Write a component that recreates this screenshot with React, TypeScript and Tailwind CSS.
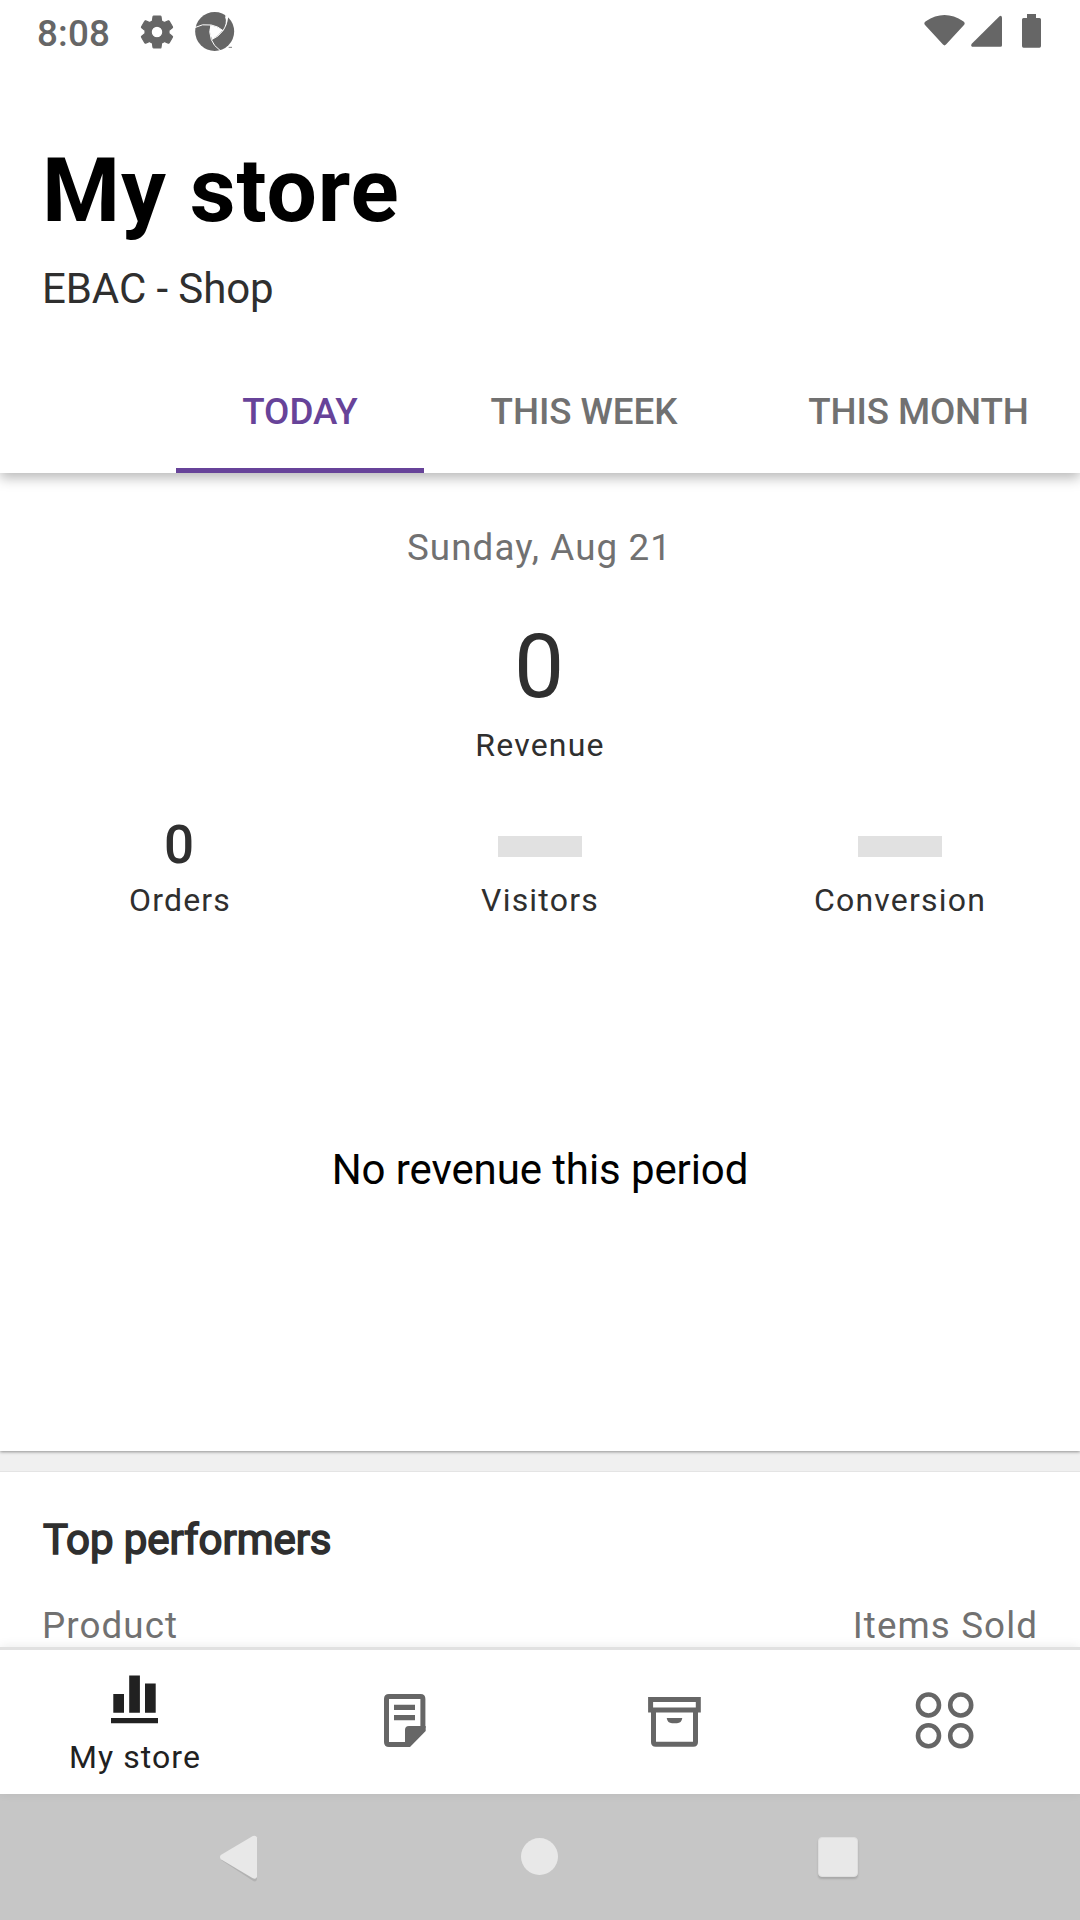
import type { ReactNode } from "react";

function StatusBar() {
  return (
    <div className="flex h-[63px] items-start justify-between text-[#666666]">
      <div className="flex items-start">
        <span className="ml-[37px] mt-[12px] w-[103px] text-[36.75px] font-medium leading-[43px] tracking-[0.2px]">8:08</span>
        <svg className="ml-[-3px] mt-[11.5px] size-[40px]" viewBox="0 0 24 24" fill="currentColor">
          <path d="M19.14 12.94c.04-.3.06-.61.06-.94 0-.32-.02-.64-.07-.94l2.03-1.58a.49.49 0 0 0 .12-.61l-1.92-3.32a.488.488 0 0 0-.59-.22l-2.39.96c-.5-.38-1.03-.7-1.62-.94l-.36-2.54a.484.484 0 0 0-.48-.41h-3.84c-.24 0-.43.17-.47.41l-.36 2.54c-.59.24-1.13.57-1.62.94l-2.39-.96c-.22-.08-.47 0-.59.22L2.74 8.87c-.12.21-.08.47.12.61l2.03 1.58c-.05.3-.09.63-.09.94s.02.64.07.94l-2.03 1.58a.49.49 0 0 0-.12.61l1.92 3.32c.12.22.37.29.59.22l2.39-.96c.5.38 1.03.7 1.62.94l.36 2.54c.05.24.24.41.48.41h3.84c.24 0 .44-.17.47-.41l.36-2.54c.59-.24 1.13-.56 1.62-.94l2.39.96c.22.08.47 0 .59-.22l1.92-3.32c.12-.22.07-.47-.12-.61l-2.01-1.58zM12 15.5a3.5 3.5 0 1 1 0-7 3.5 3.5 0 0 1 0 7z" stroke="currentColor" strokeWidth="0.700" />
        </svg>
        <svg className="ml-[16px] mt-[10px] h-[44px] w-[44px]" viewBox="579 30 132 132">
          <circle cx="644" cy="94.500" r="58.500" fill="currentColor" />
          <path d="M632 76Q652 79 668 91Q656 108 637 118Q625 97 632 76Z" fill="#fff" />
          <path d="M584 83Q606 70 634 75Q655 79 669 92M677 50Q684 70 669 92Q656 110 635 119M660 151Q641 138 634 119Q625 96 633 75" fill="none" stroke="#fff" strokeWidth="3" />
          <path d="M675 42L685 50L682 66L678 78Q681 62 675 42Z" fill="#fff" />
          <path d="M686 142h10" stroke="currentColor" strokeWidth="2.500" />
        </svg>
      </div>
      <svg className="mr-[30px] mt-[10px] h-[40px] w-[130px]" viewBox="920 10 130 40" fill="currentColor">
        <path d="M925.800 31Q944.500 18.500 963.200 31Q965.500 32.500 964.200 34.500L946 54.400Q944.500 56 943 54.400L924.800 34.500Q923.500 32.500 925.800 31Z" transform="translate(0 -9.800)" />
        <path d="M972 46.700H1000.500Q1002 46.700 1002 45.200V17.500Q1001.500 15 999.500 16.300L971.500 44Q970.500 46.300 972 46.700Z" />
        <path d="M1027 14H1036V18H1039.500Q1041 18 1041 19.500V46Q1041 47.700 1039.500 47.700H1023.500Q1022 47.700 1022 46V19.500Q1022 18 1023.500 18H1027Z" />
      </svg>
    </div>
  );
}

function Header() {
  return (
    <header className="relative z-10 h-[473px] shrink-0 overflow-visible bg-white shadow-[0_5px_12px_rgba(0,0,0,0.28)]">
      <StatusBar />
      <div className="px-[42px] pt-[75px]">
        <h1 className="text-[89.25px] font-bold leading-[105px] tracking-[0.87px] text-black">My store</h1>
        <p className="mt-[21px] text-[42px] leading-[49px] tracking-[-0.1px] text-[#2f2f2f]">EBAC - Shop</p>
      </div>
      <div className="mt-[34px] flex h-[126px] overflow-hidden pl-[176px] text-[36.75px] font-medium text-[#717171]">
        <div className="flex w-[248px] shrink-0 items-center justify-center border-b-5 border-[#674399] pt-[9px] text-[#674399]">TODAY</div>
        <div className="flex w-[320px] shrink-0 items-center justify-center pt-[4px] tracking-[-0.05px]">THIS WEEK</div>
        <div className="flex w-[349px] shrink-0 items-center justify-center pt-[4px] tracking-[-0.12px]">THIS MONTH</div>
      </div>
    </header>
  );
}

function Stat({ label, value }: { label: string; value?: string }) {
  return (
    <div className="flex flex-col items-center">
      <div className="flex h-[62px] items-center text-[53px] font-medium leading-[62px]">
        {value ? <span className="mr-[2px]">{value}</span> : <span className="mt-[3px] h-[21px] w-[84px] bg-[#e1e1e1]" />}
      </div>
      <span className="mt-[6px] text-[32px] leading-[37px] tracking-[1.2px]">{label}</span>
    </div>
  );
}

function NavItem({ children, label }: { children: ReactNode; label?: string }) {
  return (
    <div className="flex w-[270px] flex-col items-center">
      {children}
      {label && <span className="mt-[13px] text-[32px] leading-[37px] tracking-[1.05px] text-[#212121]">{label}</span>}
    </div>
  );
}

function BottomNav() {
  return (
    <nav className="relative z-10 flex h-[147px] shrink-0 border-t-3 border-[#e1e1e1] bg-white text-[#666666] shadow-[0_-1px_10px_rgba(0,0,0,0.08)]">
      <NavItem label="My store">
        <svg className="mt-[22px] h-[54px] w-[52px]" viewBox="109 1672 52 54" fill="#212121">
          <path d="M113.300 1694h10.700v18.700h-10.700zM129.200 1675.600h10.700v37.100h-10.700zM145 1683.500h10.700v29.200h-10.700zM111 1718h47v5.300h-47z" />
        </svg>
      </NavItem>
      <NavItem>
        <svg className="mt-[42px] h-[56px] w-[46px]" viewBox="382 1692 46 56">
          <path d="M409 1744.500H389Q386.500 1744.500 386.500 1742V1699Q386.500 1696.600 389 1696.600H420.500Q422.900 1696.600 422.900 1699V1728" fill="none" stroke="currentColor" strokeWidth="5" />
          <path d="M394 1704.800h21v5.200h-21zM394 1715h21v5.300h-21zM405 1730Q405 1726 409 1726H425.700V1731L410 1747H405Z" fill="currentColor" />
        </svg>
      </NavItem>
      <NavItem>
        <svg className="mt-[45px] h-[54px] w-[56px]" viewBox="647 1695 56 54">
          <path d="M650.600 1699.500H698.300V1710H650.600Z" fill="none" stroke="currentColor" strokeWidth="5" />
          <path d="M653.500 1710V1742Q653.500 1744.200 655.700 1744.200H693.300Q695.500 1744.200 695.500 1742V1710" fill="none" stroke="currentColor" strokeWidth="5" />
          <path d="M666.700 1718H682.300Q681.500 1723.200 677 1723.200H672Q667.500 1723.200 666.700 1718Z" fill="currentColor" />
        </svg>
      </NavItem>
      <NavItem>
        <svg className="mt-[40px] h-[61px] w-[62px]" viewBox="914 1690 62 61" fill="none" stroke="currentColor" strokeWidth="4.600">
          <circle cx="928.500" cy="1705" r="10.500" />
          <circle cx="960.700" cy="1705" r="10.500" />
          <circle cx="928.500" cy="1735.700" r="10.500" />
          <circle cx="960.700" cy="1735.700" r="10.500" />
        </svg>
      </NavItem>
    </nav>
  );
}

function SystemNav() {
  return (
    <div className="flex h-[126px] shrink-0 items-center justify-between bg-[#c6c6c6] pl-[215px] pr-[217px]">
      <svg className="h-[56px] w-[48px]" viewBox="215 1829 48 56">
        <path d="M221 1860L252.500 1880.600Q256.500 1883 257 1879V1840L221 1860Z" fill="#b2b2b2" />
        <path d="M220.800 1855L252.800 1836Q256 1834.800 257 1837.500V1877Q256 1879.500 252.800 1878.200L220.800 1859.200Q219.200 1857 220.800 1855Z" fill="#e8e8e8" />
      </svg>
      <div className="mb-[1px] ml-[8px] size-[37px] rounded-full bg-[#e8e8e8]" />
      <div className="ml-[10px] mr-[5px] size-[40px] rounded-[4px] border border-[#dedede] bg-[#e8e8e8] shadow-[0_2px_2px_rgba(0,0,0,0.15)]" />
    </div>
  );
}

export default function App() {
  return (
    <div className="flex h-[1920px] w-[1080px] flex-col overflow-hidden bg-white font-['Roboto',sans-serif] text-[#2f2f2f]">
      <Header />
      <main className="flex min-h-0 flex-1 flex-col overflow-hidden bg-[#f0f0f0]">
        <section className="h-[978px] shrink-0 bg-white shadow-[0_1px_3px_rgba(0,0,0,0.4)]">
          <p className="pr-[1px] pt-[53px] text-center text-[36.75px] leading-[43px] tracking-[1.1px] text-[#717171]">Sunday, Aug 21</p>
          <p className="mt-[45px] pr-[2px] text-center text-[89.25px] leading-[105px]">0</p>
          <p className="mt-[8px] text-center text-[32px] leading-[37px] tracking-[1.2px]">Revenue</p>
          <div className="mt-[50px] grid grid-cols-3">
            <Stat label="Orders" value="0" />
            <Stat label="Visitors" />
            <Stat label="Conversion" />
          </div>
          <p className="mt-[226px] text-center text-[42px] leading-[49px] tracking-[-0.1px] text-black">No revenue this period</p>
        </section>
        <section className="mt-[20px] h-[200px] shrink-0 border-t border-[#e4e4e4] bg-white px-[42px]">
          <h2 className="pl-[1px] pt-[43px] text-[42px] font-normal leading-[49px] tracking-[-0.05px] [-webkit-text-stroke:1.6px_#2f2f2f]">Top performers</h2>
          <div className="mt-[40px] flex justify-between text-[36.75px] leading-[43px] tracking-[1.1px] text-[#717171]">
            <span>Product</span>
            <span>Items Sold</span>
          </div>
        </section>
      </main>
      <BottomNav />
      <SystemNav />
    </div>
  );
}
